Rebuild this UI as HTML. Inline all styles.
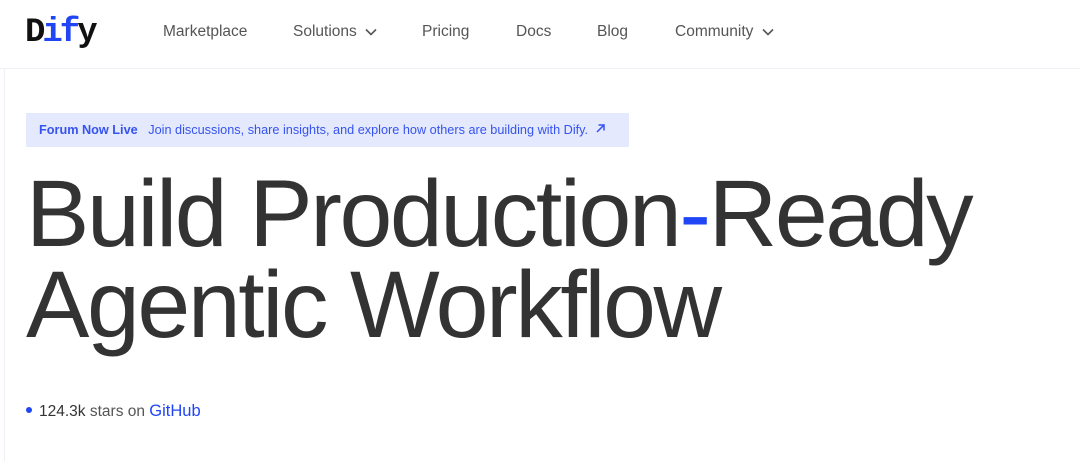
<!DOCTYPE html>
<html><head><meta charset="utf-8"><style>
*{margin:0;padding:0;box-sizing:border-box}
body{width:1080px;height:461px;overflow:hidden;background:#fff;font-family:"Liberation Sans",sans-serif;position:relative}
.hdr{position:absolute;left:0;top:0;width:1080px;height:69px;border-bottom:1px solid #eef0f5}
.logo{position:absolute;left:25px;top:14px;font-family:"Liberation Mono",monospace;font-weight:bold;font-size:34px;letter-spacing:-3px;color:#111}
.logo span{color:#1f45f5}
.nav{position:absolute;top:23px;font-size:15.5px;color:#555}
.vl{position:absolute;left:4px;top:69px;width:1px;height:392px;background:#eef0f8}
.banner{position:absolute;left:26px;top:113px;width:603px;height:34px;background:#e4e9fd;color:#3553f0;font-size:12.7px;line-height:34px;padding-left:13px;white-space:nowrap}
.h1{position:absolute;left:26px;top:169px;font-size:95px;line-height:91px;color:#333;letter-spacing:-2.4px;white-space:nowrap}
.stars{position:absolute;left:26px;top:402px;font-size:15.5px;color:#555;white-space:nowrap}
</style></head><body>
<div class="hdr">
<div class="logo">D<span>if</span>y</div>
<div class="nav" style="left:163px">Marketplace</div>
<div class="nav" style="left:293px">Solutions <svg width="12" height="8" viewBox="0 0 12 8" style="margin-left:4px"><path d="M1 1.5l5 5 5-5" fill="none" stroke="#555" stroke-width="1.6"/></svg></div>
<div class="nav" style="left:422px">Pricing</div>
<div class="nav" style="left:516px">Docs</div>
<div class="nav" style="left:597px">Blog</div>
<div class="nav" style="left:675px">Community <svg width="12" height="8" viewBox="0 0 12 8" style="margin-left:4px"><path d="M1 1.5l5 5 5-5" fill="none" stroke="#555" stroke-width="1.6"/></svg></div>
</div>
<div class="vl"></div>
<div class="banner"><b>Forum Now Live</b>&nbsp;&nbsp; Join discussions, share insights, and explore how others are building with Dify. &nbsp;<svg width="11" height="11" viewBox="0 0 11 11"><path d="M2 9L9 2M3.5 2H9v5.5" fill="none" stroke="#3553f0" stroke-width="1.5"/></svg></div>
<div class="h1">Build Production<span style="color:#1f45f5">-</span>Ready<br>Agentic Workflow</div>
<div class="stars"><span style="display:inline-block;width:6px;height:6px;border-radius:50%;background:#1f45f5;margin-right:7px;vertical-align:middle;position:relative;top:-2px"></span><span style="color:#333">124.3k</span> stars on <span style="color:#1f45f5;font-size:16.5px">GitHub</span></div>
</body></html>
